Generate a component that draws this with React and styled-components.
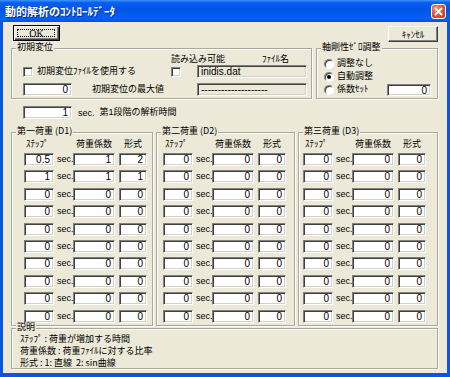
import React from 'react'
import styled, { createGlobalStyle } from 'styled-components'

const GlobalStyle = createGlobalStyle`
  html, body { margin: 0; padding: 0; background: #fff; }
  body {
    font-family: "Liberation Sans", "Noto Sans CJK JP", sans-serif;
    font-size: 9px;
    color: #000;
  }
`

const Window = styled.div`
  width: 450px;
  height: 377px;
  box-sizing: border-box;
  display: flex;
  flex-direction: column;
  background: #0a56e4;
  padding: 0 3px 4px 3px;
`

const TitleBar = styled.div`
  height: 22px;
  margin: 0 -3px;
  padding: 0 4px 0 5px;
  display: flex;
  align-items: center;
  justify-content: space-between;
  background: linear-gradient(180deg, #3d95ff 0%, #0a5fef 12%, #0054e8 45%, #0461f6 85%, #0552dd 100%);
`

const Title = styled.span`
  color: #fff;
  font-family: "Noto Sans CJK JP", sans-serif;
  font-weight: bold;
  font-size: 11px;
  text-shadow: 1px 1px 0 #0b2b8f;
`

const CloseButton = styled.div`
  width: 15px;
  height: 15px;
  box-sizing: border-box;
  border: 1px solid #fff;
  border-radius: 3px;
  background: radial-gradient(circle at 35% 30%, #f09a80 0%, #de5b3c 45%, #c2371b 100%);
  display: flex;
  align-items: center;
  justify-content: center;
`

const Body = styled.div`
  flex: 1;
  background: #ece9d8;
  display: flex;
  flex-direction: column;
  padding: 0 9px 0 8px;
`

const ButtonRow = styled.div`
  display: flex;
  justify-content: space-between;
  align-items: flex-start;
  margin-top: 3px;
  padding-left: 2px;
`

const Button = styled.div`
  box-sizing: border-box;
  width: ${p => p.$w}px;
  height: 16px;
  margin-top: ${p => p.$top || 0}px;
  background: #ece9d8;
  border: 1px solid;
  border-color: ${p => (p.$default ? '#000' : '#fff #404040 #404040 #fff')};
  box-shadow: ${p =>
    p.$default
      ? 'inset 1px 1px #fff, inset -1px -1px #404040, inset -2px -2px #808080'
      : 'inset -1px -1px #808080'};
  display: flex;
  align-items: center;
  justify-content: center;
  position: relative;
  font-size: ${p => (p.$default ? 10 : 9)}px;
  font-family: ${p => (p.$default ? '"Liberation Serif", serif' : '"Noto Sans CJK JP", sans-serif')};
`

const FocusRect = styled.div`
  position: absolute;
  inset: 3px 4px 3px 3px;
  border: 1px dotted #000;
`

const Row = styled.div`
  display: flex;
  align-items: flex-start;
  gap: ${p => p.$gap || 0}px;
  margin-top: ${p => p.$top || 0}px;
`

const Group = styled.div`
  position: relative;
  box-sizing: border-box;
  width: ${p => (p.$w ? p.$w + 'px' : 'auto')};
  height: ${p => p.$h}px;
  border: 1px solid #aca899;
  box-shadow: inset 1px 1px #fff, 1px 1px #fff;
  display: flex;
  flex-direction: column;
  padding: ${p => p.$pad || '0'};
`

const Legend = styled.span`
  position: absolute;
  top: -7px;
  left: 4px;
  padding: 0 1px;
  line-height: 10px;
  background: #ece9d8;
  font-family: "Noto Sans CJK JP", sans-serif;
  font-size: 9px;
  white-space: nowrap;
`

const Line = styled.div`
  display: flex;
  align-items: center;
  height: ${p => p.$h || 13}px;
  margin-top: ${p => p.$top || 0}px;
`

const Cell = styled.div`
  display: flex;
  align-items: center;
  width: ${p => p.$w}px;
  flex: none;
  justify-content: ${p => p.$justify || 'flex-start'};
  padding-right: ${p => p.$padRight || 0}px;
  box-sizing: border-box;
`

const Label = styled.span`
  font-family: "Liberation Sans", "Noto Sans CJK JP", sans-serif;
  font-size: 9px;
  margin-left: ${p => p.$left || 0}px;
  white-space: nowrap;
  line-height: 11px;
`

const Sec = styled.span`
  font-size: 9px;
  color: #000;
  margin-left: ${p => p.$left || 0}px;
`

const Field = styled.div`
  box-sizing: border-box;
  width: ${p => (p.$w ? p.$w + 'px' : '100%')};
  height: ${p => p.$h || 13}px;
  margin-left: ${p => p.$left || 0}px;
  background: ${p => (p.$readOnly ? '#ece9d8' : '#fff')};
  border: 1px solid;
  border-color: #808080 #fff #fff #808080;
  box-shadow: inset 1px 1px #404040, inset -1px -1px #d4d0c8;
  font-family: "Liberation Sans", sans-serif;
  font-size: 10px;
  line-height: 11px;
  text-align: ${p => (p.$alignLeft ? 'left' : 'right')};
  padding: 0 3px;
  white-space: nowrap;
  overflow: hidden;
`

const Check = styled.div`
  box-sizing: border-box;
  width: 10px;
  height: 10px;
  flex: none;
  background: #fff;
  border: 1px solid;
  border-color: #808080 #fff #fff #808080;
  box-shadow: inset 1px 1px #404040, inset -1px -1px #d4d0c8;
`

const Radio = styled.div`
  box-sizing: border-box;
  width: 10px;
  height: 10px;
  flex: none;
  border-radius: 50%;
  background: #fff;
  border: 1px solid;
  border-color: #808080 #fff #fff #808080;
  box-shadow: inset 1px 1px #404040;
  display: flex;
  align-items: center;
  justify-content: center;
  &::after {
    content: '';
    display: ${p => (p.$on ? 'block' : 'none')};
    width: 4px;
    height: 4px;
    border-radius: 50%;
    background: #000;
  }
`

const LoadGrid = styled.div`
  display: grid;
  grid-template-columns: 30px 19px 42px 32px;
  grid-auto-rows: 13px;
  row-gap: 4.4px;
  padding-left: ${p => p.$pad}px;
`

const HeadGrid = styled(LoadGrid)`
  grid-auto-rows: 10px;
  margin: 6px 0 4px;
`

const Head = styled.span`
  font-family: "Noto Sans CJK JP", sans-serif;
  font-size: 9px;
  line-height: 10px;
  white-space: nowrap;
  text-align: ${p => p.$align || 'center'};
  padding-left: ${p => p.$left || 0}px;
`

const SecCell = styled.span`
  font-size: 9px;
  line-height: 13px;
  padding-left: 3px;
`

const NoteText = styled.div`
  font-family: "Noto Sans CJK JP", sans-serif;
  font-size: 9px;
  line-height: 12px;
  padding-left: 8px;
  white-space: pre;
`

const loads = [
  {
    title: '第一荷重 (D1)',
    w: 142,
    pad: 12,
    rows: [['0.5', '1', '2'], ['1', '1', '1'], ...Array(8).fill(['0', '0', '0'])],
  },
  { title: '第二荷重 (D2)', w: 139, pad: 6, rows: Array(10).fill(['0', '0', '0']) },
  { title: '第三荷重 (D3)', w: 140, pad: 4, rows: Array(10).fill(['0', '0', '0']) },
]

const LoadGroup = ({ title, w, pad, rows }) => (
  <Group $w={w} $h={194}>
    <Legend>{title}</Legend>
    <HeadGrid $pad={pad}>
      <Head $align="left" $left={2}>ｽﾃｯﾌﾟ</Head>
      <span />
      <Head>荷重係数</Head>
      <Head $left={4}>形式</Head>
    </HeadGrid>
    <LoadGrid $pad={pad}>
      {rows.map((r, i) => (
        <React.Fragment key={i}>
          <Field>{r[0]}</Field>
          <SecCell>sec.</SecCell>
          <Field>{r[1]}</Field>
          <Field $w={28} $left={4}>{r[2]}</Field>
        </React.Fragment>
      ))}
    </LoadGrid>
  </Group>
)

export default function App() {
  return (
    <>
      <GlobalStyle />
      <Window>
        <TitleBar>
          <Title>動的解析のｺﾝﾄﾛｰﾙﾃﾞｰﾀ</Title>
          <CloseButton>
            <svg width="9" height="9" viewBox="0 0 9 9">
              <path d="M1 1 L8 8 M8 1 L1 8" stroke="#fff" strokeWidth="1.8" />
            </svg>
          </CloseButton>
        </TitleBar>
        <Body>
          <ButtonRow>
            <Button $w={47} $default>
              <FocusRect />
              OK
            </Button>
            <Button $w={50} $top={1}>ｷｬﾝｾﾙ</Button>
          </ButtonRow>

          <Row $top={6} $gap={4}>
            <Group $w={301} $h={51} $pad="0 0 0 11px">
              <Legend>初期変位</Legend>
              <Line $h={10} $top={5}>
                <Cell $w={148} />
                <Cell $w={136} $justify="space-between" $padRight={18}>
                  <Label>読み込み可能</Label>
                  <Label>ﾌｧｲﾙ名</Label>
                </Cell>
              </Line>
              <Line $top={1}>
                <Cell $w={148}>
                  <Check />
                  <Label $left={4}>初期変位ﾌｧｲﾙを使用する</Label>
                </Cell>
                <Cell $w={26}>
                  <Check />
                </Cell>
                <Field $w={110} $readOnly $alignLeft>inidis.dat</Field>
              </Line>
              <Line $top={5}>
                <Cell $w={148}>
                  <Field $w={49}>0</Field>
                  <Label $left={20}>初期変位の最大値</Label>
                </Cell>
                <Cell $w={26} />
                <Field $w={110} $readOnly $alignLeft>--------------------</Field>
              </Line>
            </Group>

            <Group $w={122} $h={51} $pad="8px 6px 0 7px">
              <Legend>軸剛性ｾﾞﾛ調整</Legend>
              <Line>
                <Radio />
                <Label $left={3}>調整なし</Label>
              </Line>
              <Line>
                <Radio $on />
                <Label $left={3}>自動調整</Label>
              </Line>
              <Line>
                <Radio />
                <Label $left={3}>係数ｾｯﾄ</Label>
                <Field $w={44} $h={12} style={{ marginLeft: 'auto' }}>0</Field>
              </Line>
            </Group>
          </Row>

          <Row $top={7}>
            <Line style={{ paddingLeft: 12 }}>
              <Field $w={49}>1</Field>
              <Sec $left={6}>sec.</Sec>
              <Label $left={5}>第1段階の解析時間</Label>
            </Line>
          </Row>

          <Row $top={13} $gap={3}>
            {loads.map(g => (
              <LoadGroup key={g.title} {...g} />
            ))}
          </Row>

          <Row $top={2}>
            <Group $w={427} $h={41} $pad="4px 0 0 0">
              <Legend>説明</Legend>
              <NoteText>ｽﾃｯﾌﾟ : 荷重が増加する時間</NoteText>
              <NoteText>荷重係数 : 荷重ﾌｧｲﾙに対する比率</NoteText>
              <NoteText>形式 : 1: 直線  2: sin曲線</NoteText>
            </Group>
          </Row>
        </Body>
      </Window>
    </>
  )
}
